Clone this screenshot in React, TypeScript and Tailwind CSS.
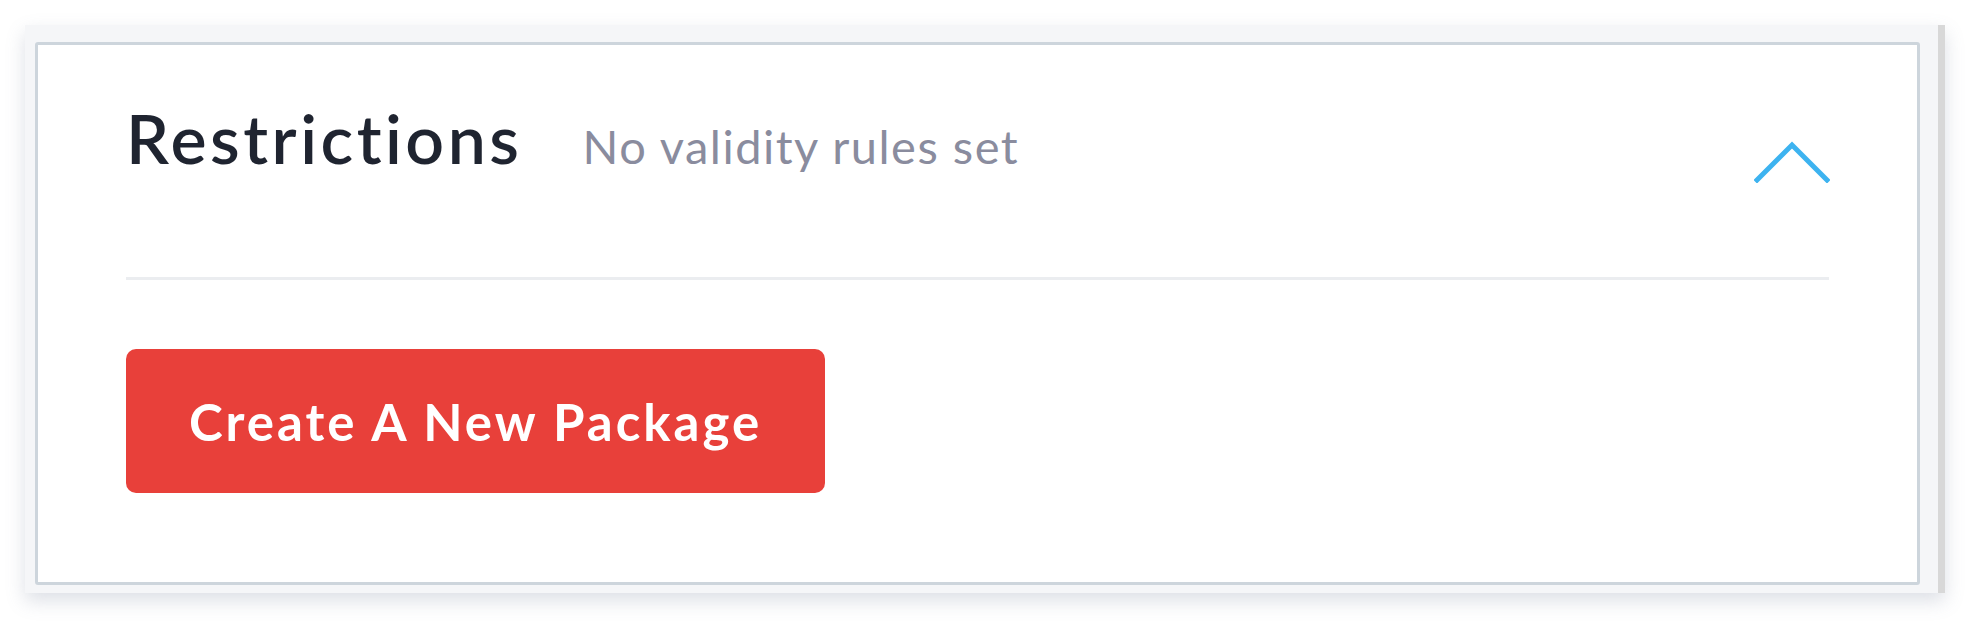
export default function App() {
  return (
    <div className="w-[1970px] h-[634px] bg-white pt-[25px] pl-[25px] font-['Lato','Noto_Sans',sans-serif]">
      <div className="w-[1920px] h-[568px] bg-[#f5f6f8] border-r-[7px] border-[#d8d8d8] shadow-[0_8px_18px_rgba(100,116,139,0.22)] pt-[17px] pl-[10px]">
        <div className="w-[1885px] h-[543px] bg-white border-[3px] border-[#cdd5dc] rounded-[3px] pt-[59px] px-[88px]">
          <div className="flex items-start justify-between h-[80px]">
            <div className="flex items-baseline gap-[60px]">
              <h2 className="text-[68px] leading-none font-semibold text-[#1f2430] tracking-[3.5px]">Restrictions</h2>
              <span className="text-[47px] leading-none text-[#8a8c9e] tracking-[1.5px]">No validity rules set</span>
            </div>
            <svg viewBox="0 0 76 42" className="w-[76px] h-[42px] mt-[37px] -mr-[1px]" fill="none">
              <polyline points="3,39 38,4 73,39" stroke="#3db3f0" strokeWidth="5" strokeLinecap="square" />
            </svg>
          </div>
          <div className="mt-[93px] h-[3px] bg-[#ebedf0]" />
          <button className="mt-[69px] w-[699px] h-[144px] rounded-[10px] bg-[#e8403a] text-white font-bold text-[51px] leading-none tracking-[3px]">
            Create A New Package
          </button>
        </div>
      </div>
    </div>
  );
}
